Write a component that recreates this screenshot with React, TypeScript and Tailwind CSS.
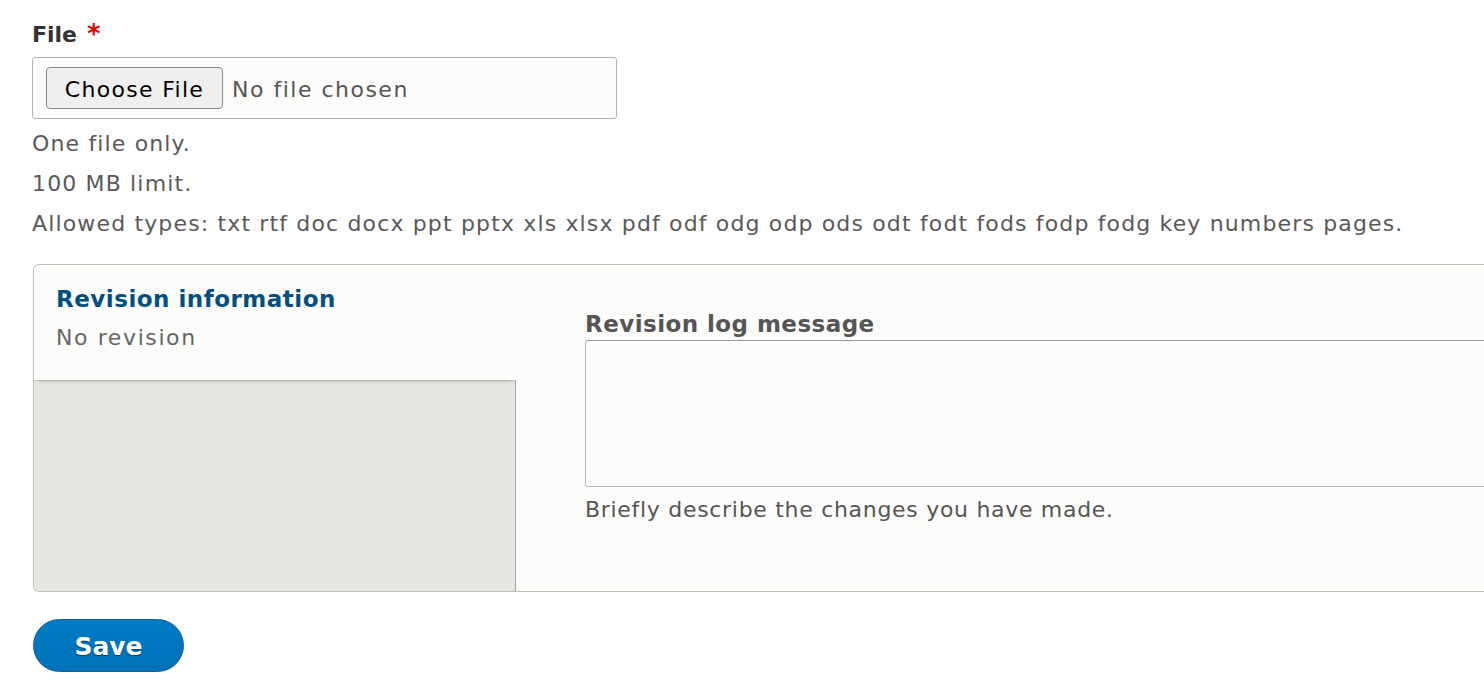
export default function App() {
  return (
    <div className="w-screen h-[696px] overflow-hidden bg-white font-['DejaVu_Sans',sans-serif] text-[22px] tracking-[1.15px]">
      <div className="pl-[32px] pt-[20px]">
        {/* File field */}
        <div className="flex items-start h-[30px] leading-[30px] text-[22px] font-bold tracking-normal text-[#333]">
          File
          <span className="ml-[10px] mt-[2px] text-[#e00] text-[26px] leading-[24px]">*</span>
        </div>
        <div className="mt-[7px] w-[585px] h-[62px] flex items-center rounded-[3px] border border-[#b4b4b4] bg-[#fcfcfa] pl-[13px]">
          <button className="h-[42px] w-[177px] pt-[3px] rounded-[4px] border border-[#888] bg-[#efefef] text-[22px] tracking-[1.3px] text-black">
            Choose File
          </button>
          <span className="ml-[9px] pt-[3px] tracking-[1.5px] text-[#555]">No file chosen</span>
        </div>
        <div className="mt-[5px] text-[#595959] leading-[40px]">
          <div>One file only.</div>
          <div>100 MB limit.</div>
          <div>Allowed types: txt rtf doc docx ppt pptx xls xlsx pdf odf odg odp ods odt fodt fods fodp fodg key numbers pages.</div>
        </div>

        {/* Revision details */}
        <div className="mt-[20px] ml-[1px] w-[1500px] h-[328px] flex rounded-l-[6px] border border-r-0 border-[#bebfb9] bg-[#fcfcfa] overflow-hidden">
          <div className="w-[482px] flex flex-col">
            <div className="h-[115px] bg-[#fcfcfa] px-[22px] pt-[17px] shadow-[0_5px_4px_-4px_rgba(0,0,0,0.2)] relative z-10">
              <div className="text-[#004f80] font-bold text-[23px] tracking-[0.5px] leading-[34px]">Revision information</div>
              <div className="mt-[3px] text-[#666] tracking-[1.6px] leading-[38px]">No revision</div>
            </div>
            <div className="flex-1 bg-[#e6e5e1] border-t border-r border-t-[#c8c8c4] border-r-[#a6a6a6]" />
          </div>
          <div className="flex-1 pl-[69px] pt-[44px]">
            <div className="text-[#555] font-bold text-[23px] tracking-[0.45px] leading-[30px]">Revision log message</div>
            <div className="mt-[1px] h-[147px] rounded-[3px] border border-[#b8b8b8] border-t-[#999] bg-[#fcfcfa]" />
            <div className="mt-[6px] text-[#555] tracking-[0.7px] leading-[34px]">Briefly describe the changes you have made.</div>
          </div>
        </div>

        {/* Save */}
        <button className="mt-[27px] ml-[1px] w-[151px] h-[53px] pt-[2px] rounded-full border border-[#1e5c90] bg-gradient-to-b from-[#007bc6] to-[#0071b8] text-white font-bold text-[25px] tracking-normal [text-shadow:0_1px_1px_rgba(0,0,0,0.5)]">
          Save
        </button>
      </div>
    </div>
  );
}
